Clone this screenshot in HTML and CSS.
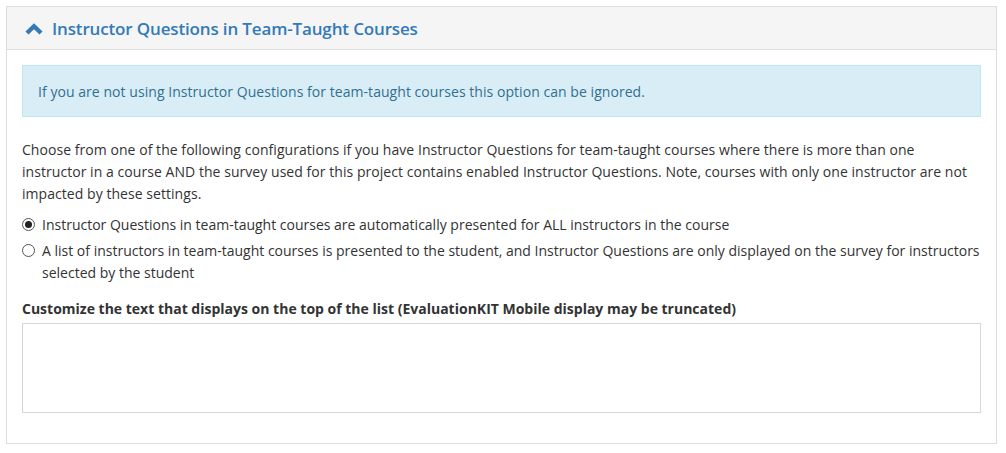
FILE: index.html
```html
<!DOCTYPE html>
<html lang="en">
<head>
  <meta charset="UTF-8">
  <meta name="viewport" content="width=device-width, initial-scale=1.0">
  <title>Instructor Questions in Team-Taught Courses</title>
  <link rel="stylesheet" href="styles.css">
</head>
<body>
  <div class="panel">
    <div class="panel-heading">
      <svg class="chevron" width="18" height="12" viewBox="0 0 18 12" aria-hidden="true">
        <polyline points="2,10 9,3.2 16,10" fill="none" stroke="#337ab7" stroke-width="4.4" stroke-linejoin="miter"/>
      </svg>
      <h3 class="panel-title">Instructor Questions in Team-Taught Courses</h3>
    </div>

    <div class="panel-body">
      <div class="alert-info">
        If you are not using Instructor Questions for team-taught courses this option can be ignored.
      </div>

      <p class="intro">
        Choose from one of the following configurations if you have Instructor Questions for team-taught courses where there is more than one
        instructor in a course AND the survey used for this project contains enabled Instructor Questions. Note, courses with only one instructor are not
        impacted by these settings.
      </p>

      <div class="options">
        <label class="radio">
          <input type="radio" name="teamTaught" value="all" checked>
          <span>Instructor Questions in team-taught courses are automatically presented for ALL instructors in the course</span>
        </label>
        <label class="radio">
          <input type="radio" name="teamTaught" value="selected">
          <span>A list of instructors in team-taught courses is presented to the student, and Instructor Questions are only displayed on the survey for instructors selected by the student</span>
        </label>
      </div>

      <label class="field-label" for="listText">Customize the text that displays on the top of the list (EvaluationKIT Mobile display may be truncated)</label>
      <textarea id="listText"></textarea>
    </div>
  </div>
</body>
</html>
```
FILE: styles.css
```css
:root {
  --text: #333333;
  --border: #dddddd;
  --primary: #337ab7;
  --info-bg: #d9edf7;
  --info-border: #bce8f1;
  --info-text: #31708f;
}

body {
  margin: 0;
  font-family: "Open Sans", "Noto Sans", Arial, sans-serif;
  font-size: 14px;
  color: var(--text);
  background-color: #ffffff;
}

.panel {
  margin: 6px 9px 0 6px;
  border: 1px solid var(--border);
  background-color: #ffffff;
}

.panel-heading {
  display: flex;
  align-items: center;
  gap: 9px;
  height: 42px;
  padding: 0 18px;
  background-color: #f5f5f5;
  border-bottom: 1px solid var(--border);
}

.chevron {
  flex: none;
  margin-top: 1px;
}

.panel-title {
  margin: 0;
  font-size: 17px;
  font-weight: 600;
  letter-spacing: -0.15px;
  color: var(--primary);
}

.panel-body {
  padding: 15px;
}

.alert-info {
  padding: 16px 15px 14px;
  line-height: 20px;
  background-color: var(--info-bg);
  border: 1px solid var(--info-border);
  color: var(--info-text);
  letter-spacing: 0.05px;
  margin-bottom: 22px;
}

.intro {
  margin: 0 0 9px 0;
  line-height: 22px;
  letter-spacing: 0.05px;
}

.options {
  display: flex;
  flex-direction: column;
  gap: 4px;
}

.radio {
  display: flex;
  align-items: flex-start;
  gap: 7px;
  line-height: 22px;
  cursor: pointer;
}

.radio input {
  appearance: none;
  -webkit-appearance: none;
  flex: none;
  width: 13px;
  height: 13px;
  margin: 4px 0 0 0;
  border: 1px solid #555555;
  border-radius: 50%;
  background-color: #ffffff;
  display: flex;
  align-items: center;
  justify-content: center;
}

.radio input:checked::after {
  content: "";
  width: 7px;
  height: 7px;
  border-radius: 50%;
  background-color: #222222;
}

.field-label {
  display: block;
  margin-top: 14px;
  margin-bottom: 3px;
  font-weight: 700;
  line-height: 22px;
}

textarea {
  display: block;
  box-sizing: border-box;
  width: 100%;
  height: 90px;
  margin: 0 0 15px 0;
  padding: 6px 12px;
  border: 1px solid #d6d6d6;
  font-family: inherit;
  font-size: 14px;
  resize: none;
}
```
